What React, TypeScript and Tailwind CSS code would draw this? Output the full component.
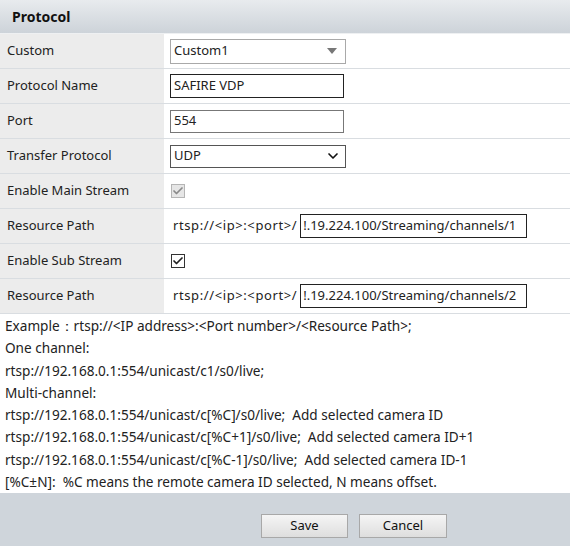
import { Check, ChevronDown } from 'lucide-react';

const font = { fontFamily: '"Noto Sans", "Open Sans", sans-serif' };

function Row({ label, children }: { label: string; children: React.ReactNode }) {
  return (
    <div className="flex h-[35px] border-b border-[#d9dde1]">
      <div className="w-[164px] shrink-0 bg-[#ececec] pl-[7px] flex items-center text-[13px] text-[#222]">{label}</div>
      <div className="flex-1 flex items-center pl-[6px]">{children}</div>
    </div>
  );
}

function CheckBox({ disabled }: { disabled?: boolean }) {
  return (
    <div
      className={
        'w-[14px] h-[14px] ml-[1px] border flex items-center justify-center ' +
        (disabled ? 'border-[#b5b5b5] bg-[#e6e6e6]' : 'border-[#333] bg-white')
      }
    >
      <Check size={12} strokeWidth={3.5} className={disabled ? 'text-[#8a8a8a]' : 'text-[#222]'} />
    </div>
  );
}

function PathRow({ value }: { value: string }) {
  return (
    <Row label="Resource Path">
      <span className="text-[13px] pl-[3px] pr-[3px] whitespace-nowrap tracking-[0.6px]">rtsp://&lt;ip&gt;:&lt;port&gt;/</span>
      <div className="w-[227px] h-[24px] border border-[#222] flex items-center pl-[2px] text-[13px] overflow-hidden whitespace-nowrap">
        {value}
      </div>
    </Row>
  );
}

export default function App() {
  const examples = [
    'Example：rtsp://<IP address>:<Port number>/<Resource Path>;',
    'One channel:',
    'rtsp://192.168.0.1:554/unicast/c1/s0/live;',
    'Multi-channel:',
    'rtsp://192.168.0.1:554/unicast/c[%C]/s0/live;  Add selected camera ID',
    'rtsp://192.168.0.1:554/unicast/c[%C+1]/s0/live;  Add selected camera ID+1',
    'rtsp://192.168.0.1:554/unicast/c[%C-1]/s0/live;  Add selected camera ID-1',
    '[%C±N]:  %C means the remote camera ID selected, N means offset.',
  ];

  return (
    <div className="w-[570px] h-[546px] flex flex-col bg-white text-[#222]" style={font}>
      <div className="h-[34px] shrink-0 bg-gradient-to-b from-[#e8ebee] to-[#cdd3d9] border-b border-[#eef0f2] flex items-center pl-[12px]">
        <span className="text-[14px] font-bold text-[#111]">Protocol</span>
      </div>

      <Row label="Custom">
        <div className="w-[176px] h-[25px] border border-[#a9a9a9] flex items-center justify-between pl-[3px] pr-[8px] text-[13px]">
          <span>Custom1</span>
          <span className="w-0 h-0 border-l-[5px] border-r-[5px] border-t-[6px] border-l-transparent border-r-transparent border-t-[#777]" />
        </div>
      </Row>
      <Row label="Protocol Name">
        <div className="w-[174px] h-[24px] border border-[#222] flex items-center pl-[3px] text-[13px]">SAFIRE VDP</div>
      </Row>
      <Row label="Port">
        <div className="w-[174px] h-[23px] border border-[#777] flex items-center pl-[3px] text-[13px]">554</div>
      </Row>
      <Row label="Transfer Protocol">
        <div className="w-[176px] h-[23px] border border-[#555] flex items-center justify-between pl-[3px] pr-[4px] text-[13px]">
          <span>UDP</span>
          <ChevronDown size={16} strokeWidth={2.5} className="text-[#111]" />
        </div>
      </Row>
      <Row label="Enable Main Stream">
        <CheckBox disabled />
      </Row>
      <PathRow value="!.19.224.100/Streaming/channels/1" />
      <Row label="Enable Sub Stream">
        <CheckBox />
      </Row>
      <PathRow value="!.19.224.100/Streaming/channels/2" />

      <div className="flex flex-col pl-[5px] pt-[1px] text-[13.6px] leading-[22.3px]">
        {examples.map((t) => (
          <div key={t} className="whitespace-pre">{t}</div>
        ))}
      </div>

      <div className="flex-1 bg-[#cfd5db] flex items-end gap-[11px] pb-[8px] pl-[261px]">
        <button className="w-[87px] h-[24px] border border-[#a8a8a8] bg-gradient-to-b from-[#f5f5f5] to-[#dedede] text-[13px] text-[#111]">Save</button>
        <button className="w-[88px] h-[24px] border border-[#a8a8a8] bg-gradient-to-b from-[#f5f5f5] to-[#dedede] text-[13px] text-[#111]">Cancel</button>
      </div>
    </div>
  );
}
